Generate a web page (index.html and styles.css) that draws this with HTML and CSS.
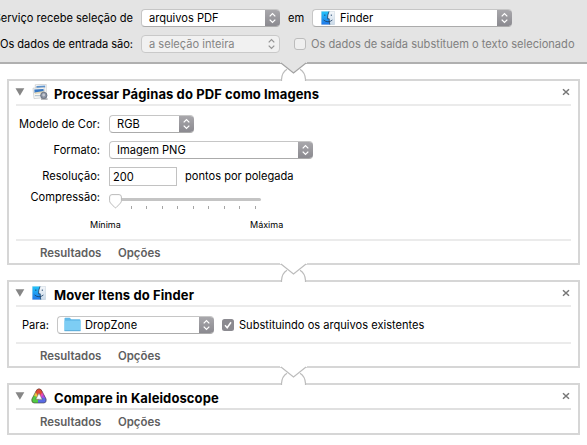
FILE: index.html
```html
<!DOCTYPE html>
<html lang="pt">
<head>
<meta charset="utf-8">
<title>Automator</title>
<link rel="stylesheet" href="styles.css">
</head>
<body>
<svg class="defs" width="0" height="0">
  <defs>
    <linearGradient id="blue" x1="0" y1="0" x2="0" y2="1"><stop offset="0" stop-color="#23c4fa"/><stop offset="1" stop-color="#2078ea"/></linearGradient>
    <linearGradient id="pale" x1="0" y1="0" x2="0" y2="1"><stop offset="0" stop-color="#f4f7fa"/><stop offset="1" stop-color="#c9d9e9"/></linearGradient>
    <symbol id="finder" viewBox="0 0 14 14">
      <rect x=".3" y=".3" width="13.4" height="13.4" rx=".8" fill="url(#pale)" stroke="#bccad7" stroke-width=".5"/>
      <path d="M.5.5H8Q6.4 4 6.5 7.8H8.2Q8.1 11 8.8 13.5H.5Z" fill="url(#blue)"/>
      <path d="M8 .5Q6.4 4 6.5 7.8H8.2Q8.1 11 8.8 13.5M3.8 3.5V5M10.3 3.5V5M2.6 9Q7 12.6 11.4 9" fill="none" stroke="#183d65" stroke-width=".8"/>
    </symbol>
    <symbol id="arrows" viewBox="0 0 15 18">
      <path d="M4.7 7.4 7.5 4.6 10.3 7.4M4.7 10.600 7.5 13.400 10.300 10.600" fill="none" stroke="currentColor" stroke-width="1.300"/>
    </symbol>
    <symbol id="join" viewBox="0 0 27 20">
      <path class="join-cover" d="M1.500 0H25.500V20H1.500Z"/>
      <path class="join-line" d="M1.500 19V17.500Q2 10.200 7 7.300M25.500 19V17.500Q25 10.200 20 7.300"/>
      <path class="join-tip" d="M0 0H27V1H25.500L13.500 11 1.500 1H0Z"/>
      <path class="join-edge" d="M1 1 13.500 11 26 1"/>
    </symbol>
    <symbol id="close" viewBox="0 0 8 8"><path d="M1 1.200 7 6.800M7 1.200 1 6.800" stroke="#777" stroke-width="1.500"/></symbol>
    <symbol id="fold" viewBox="0 0 10 8"><path d="M.5.3H9.300L4.900 7.800Z" fill="#868686"/></symbol>
  </defs>
</svg>

<header class="top">
  <div class="top-row">
    <span class="top-label service">Serviço recebe seleção de</span>
    <div class="select kind"><span>arquivos PDF</span><svg class="cap"><use href="#arrows"/></svg></div>
    <span class="em">em</span>
    <div class="select app"><svg class="app-icon"><use href="#finder"/></svg><span>Finder</span><svg class="cap"><use href="#arrows"/></svg></div>
  </div>
  <div class="top-row second">
    <span class="top-label input-label">Os dados de entrada são:</span>
    <div class="select kind off"><span>a seleção inteira</span><svg class="cap"><use href="#arrows"/></svg></div>
    <span class="box"></span>
    <span class="replace">Os dados de saída substituem o texto selecionado</span>
  </div>
</header>

<main>
  <section class="card first">
    <svg class="join from-top"><use href="#join"/></svg>
    <div class="head">
      <svg class="fold"><use href="#fold"/></svg>
      <svg class="icon" viewBox="0 0 16 16">
        <path d="M3.200.8 14.200.3V11L4 12Z" fill="#fff" stroke="#bbb" stroke-width=".6"/>
        <path d="M4.400 2 13.200 1.500V3.500L4.500 4.200Z" fill="#5d92cb"/>
        <path d="M1 4.200 12 3.500 13.400 13.600 2 14.600Z" fill="#f8f8f5" stroke="#b9bdc2" stroke-width=".6"/>
        <path d="M2.300 5.500 11.500 4.900 11.800 8.200 2.600 9Z" fill="#3778c4"/>
        <path d="M2.600 8.400 11.800 6.900V9L2.800 10Z" fill="#e1d7ba"/>
        <path d="M2.900 11.700H9" stroke="#a9bac8"/>
        <circle cx="11.800" cy="11.400" r="3.200" fill="#8d95a4" stroke="#596374" stroke-width=".7"/>
        <circle cx="11.700" cy="11" r="1.400" fill="#c4c8d2"/>
        <path d="M9 15H15.600" stroke="#73757a"/>
      </svg>
      <h2>Processar Páginas do PDF como Imagens</h2>
      <svg class="close"><use href="#close"/></svg>
    </div>
    <div class="options">
      <div class="field"><label>Modelo de Cor:</label><div class="select rgb"><span>RGB</span><svg class="cap"><use href="#arrows"/></svg></div></div>
      <div class="field"><label>Formato:</label><div class="select png"><span>Imagem PNG</span><svg class="cap"><use href="#arrows"/></svg></div></div>
      <div class="field"><label>Resolução:</label><div class="input"><span>200</span></div><span class="unit">pontos por polegada</span></div>
      <div class="field slide"><label>Compressão:</label>
        <svg class="slider" width="156" height="16" viewBox="0 0 156 16">
          <path d="M8 5.500H150.500" stroke="#c4c4c4" stroke-width="3" stroke-linecap="round"/>
          <path d="M22.500 12V15M37.500 12V15M53.500 12V15M68.500 12V15M84.500 12V15M99.500 12V15M115.500 12V15M130.500 12V15M146.500 12V15" stroke="#a5a5a5"/>
          <path d="M3 .6H10Q12.400.6 12.400 3V6.800Q12.400 8 11.500 9L7.200 13.500Q6.500 14.100 5.800 13.500L1.500 9Q.6 8 .6 6.800V3Q.6.6 3 .6Z" fill="#fff" stroke="#b4b4b4" stroke-width=".9"/>
        </svg>
      </div>
      <div class="range"><span class="min">Mínima</span><span>Máxima</span></div>
    </div>
    <footer><span class="results">Resultados</span><span>Opções</span></footer>
  </section>

  <section class="card second-card">
    <svg class="join"><use href="#join"/></svg>
    <div class="head">
      <svg class="fold"><use href="#fold"/></svg>
      <svg class="icon small"><use href="#finder"/></svg>
      <h2>Mover Itens do Finder</h2>
      <svg class="close"><use href="#close"/></svg>
    </div>
    <div class="destination">
      <label class="to">Para:</label>
      <div class="select drop"><svg class="folder" viewBox="0 0 17 16"><path d="M.5 2.300V1.500Q.5.700 1.300.700H5.700L7.300 2.200H15.500Q16.500 2.200 16.500 3.200V13.500H.5Z" fill="#62b9e8"/><path d="M.5 3.800H16.500V13.800H.5Z" fill="#7dcdf4"/><path d="M.5 13.700H16.500" stroke="#58abd8"/></svg><span>DropZone</span><svg class="cap"><use href="#arrows"/></svg></div>
      <svg class="check" viewBox="0 0 12 12"><rect width="12" height="12" rx="2.500" fill="#8b8a90"/><path d="M3 6.300 5.200 8.700 9 3.200" fill="none" stroke="#fff" stroke-width="1.500"/></svg>
      <span>Substituindo os arquivos existentes</span>
    </div>
    <footer><span class="results">Resultados</span><span>Opções</span></footer>
  </section>

  <section class="card third">
    <svg class="join"><use href="#join"/></svg>
    <div class="head">
      <svg class="fold"><use href="#fold"/></svg>
      <svg class="icon kaleido" viewBox="0 0 16 16">
        <path d="M8 .8Q5.500 1.200 4.500 4L.8 11.200Q.3 14.500 3 15H8L8 11H5.200L8 5.500Z" fill="#eac63d"/>
        <path d="M8 .8Q10.500 1.200 11.500 4L15.200 11.200 10.900 11 8 5.500Z" fill="#ec4bb4"/>
        <path d="M4.500 4Q5.500.8 8 .8 10.500.8 11.500 4L9.500 7 8 4.800 6.500 7.200Z" fill="#df4b35"/>
        <path d="M2.800 7.500.8 11.200Q.3 14.500 3 15H7L7.500 11.500H5L5.800 9Z" fill="#52cb43"/>
        <path d="M7 11.500H11.200L10.200 9.500 13.200 7.500 15.200 11.200Q15.700 14.500 13 15H7Z" fill="#596be4"/>
        <path d="M10.200 9.500 12.600 6.500 14.400 10.200Z" fill="#aa4be8"/>
        <path d="M8 .8Q6.200.8 5 3.200L.9 11Q.2 14.800 3 15H13Q15.800 14.800 15.100 11L11 3.200Q9.800.8 8 .8Z" fill="none" stroke="#454042" stroke-width=".6"/>
        <path d="M8 5.200 11.200 11.300H4.800Z" fill="#fff" stroke="#514b50" stroke-width=".5"/>
      </svg>
      <h2>Compare in Kaleidoscope</h2>
      <svg class="close"><use href="#close"/></svg>
    </div>
    <footer><span class="results">Resultados</span><span>Opções</span></footer>
  </section>
</main>
</body>
</html>
```
FILE: styles.css
```css
* { box-sizing: border-box; }
body { margin: 0; width: 587px; height: 445px; overflow: hidden; background: #fff; color: #000; font: 11.1px/18px Inter, sans-serif; }
svg { display: block; flex: none; }
span, label, h2 { white-space: nowrap; }
.defs { position: absolute; }
.top { height: 64px; padding-top: 9px; background: #e4e4e4; border-bottom: 2px solid #b0b0b0; }
.top-row { display: flex; align-items: center; height: 18px; }
.second { margin-top: 8px; }
.top-label { width: 133px; margin-right: 8px; display: flex; justify-content: flex-end; flex: none; }
.service { letter-spacing: -.02px; }
.input-label { letter-spacing: -.06px; }
.select { display: flex; align-items: center; flex: none; height: 18px; padding-left: 7px; border: 1px solid #c6c6c6; border-bottom-color: #ababab; border-right: 0; border-radius: 4px; background: #fff; overflow: hidden; }
.cap { width: 15px; height: 18px; margin: -1px 0 -1px auto; color: #fff; background: linear-gradient(#aaa9ad, #89888e); }
.kind { width: 139px; }
.off { color: #858585; background: #f1f1f1; border: 1px solid #c9c9c9; }
.off .cap { background: none; color: #969696; }
.em { width: 17px; margin: 0 7px 0 8px; }
.app { width: 200px; padding-left: 8px; }
.app-icon { width: 14px; height: 14px; margin-right: 5px; }
.box { width: 12px; height: 12px; flex: none; margin: 0 5px 0 14px; border: 1px solid #bcbcbc; border-radius: 3px; background: #efefef; }
.replace { color: #808080; }
main { padding: 15px 7px 0 7px; }
.card { position: relative; display: flex; flex-direction: column; border: 2px solid #d6d6d6; padding: 0 7px; }
.first { height: 186px; }
.second-card { height: 88px; margin-top: 15px; }
.third { height: 52px; margin-top: 15px; }
.join { position: absolute; width: 27px; height: 20px; left: 271px; top: -19px; }
.join-cover { fill: #fff; }
.join-line, .join-edge { fill: none; stroke: #bcbcbc; stroke-width: 1.2; }
.from-top { --tip: #e4e4e4; --edge: #a2a2a2; }
.join-tip { fill: var(--tip, #fff); }
.join-edge { stroke: var(--edge, #bcbcbc); }
.head { display: flex; align-items: center; height: 25px; flex: none; border-bottom: 2px solid #ebebeb; }
.fold { width: 10px; height: 8px; margin: 0 7px 1px -1px; }
.icon { width: 16px; height: 16px; margin: 0 6px 1px 0; }
.small { width: 14px; height: 14px; margin-right: 8px; }
.kaleido { margin-left: -1px; margin-right: 7px; margin-bottom: 2px; }
h2 { margin: 2px 0 0; font-size: 13px; line-height: 18px; font-weight: 700; letter-spacing: .1px; }
.close { width: 8px; height: 8px; margin: 0 1px 2px auto; }
.options { flex: 1; padding-top: 9px; }
.field { display: flex; align-items: center; height: 18px; margin-bottom: 8px; }
.field label { width: 84px; display: flex; justify-content: flex-end; margin-right: 9px; }
.rgb { width: 85px; }
.png { width: 204px; }
.input { height: 19px; width: 68px; padding-left: 3px; border: 1px solid #c2c2c2; line-height: 18px; flex: none; }
.unit { margin-left: 8px; }
.slide { align-items: flex-start; margin: -5px 0 0; height: 21px; }
.slider { margin-top: 6px; }
.range { display: flex; padding: 9px 0 0 74px; font-size: 9px; line-height: 14px; }
.min { width: 160px; }
footer { display: flex; height: 24px; flex: none; padding: 3px 0 0 24px; border-top: 2px solid #ebebeb; color: #606060; font-size: 11.4px; line-height: 18px; font-weight: 600; }
.results { width: 78px; }
.destination { display: flex; align-items: center; height: 37px; padding-left: 6px; }
.to { width: 35px; }
.drop { width: 157px; padding-left: 6px; }
.folder { width: 17px; height: 16px; margin-right: 4px; }
.check { width: 12px; height: 12px; margin: 0 5px 0 8px; }
.third .head { border-bottom-color: #e0e0e0; }
.third footer { border-top: 0; height: 23px; }
```
